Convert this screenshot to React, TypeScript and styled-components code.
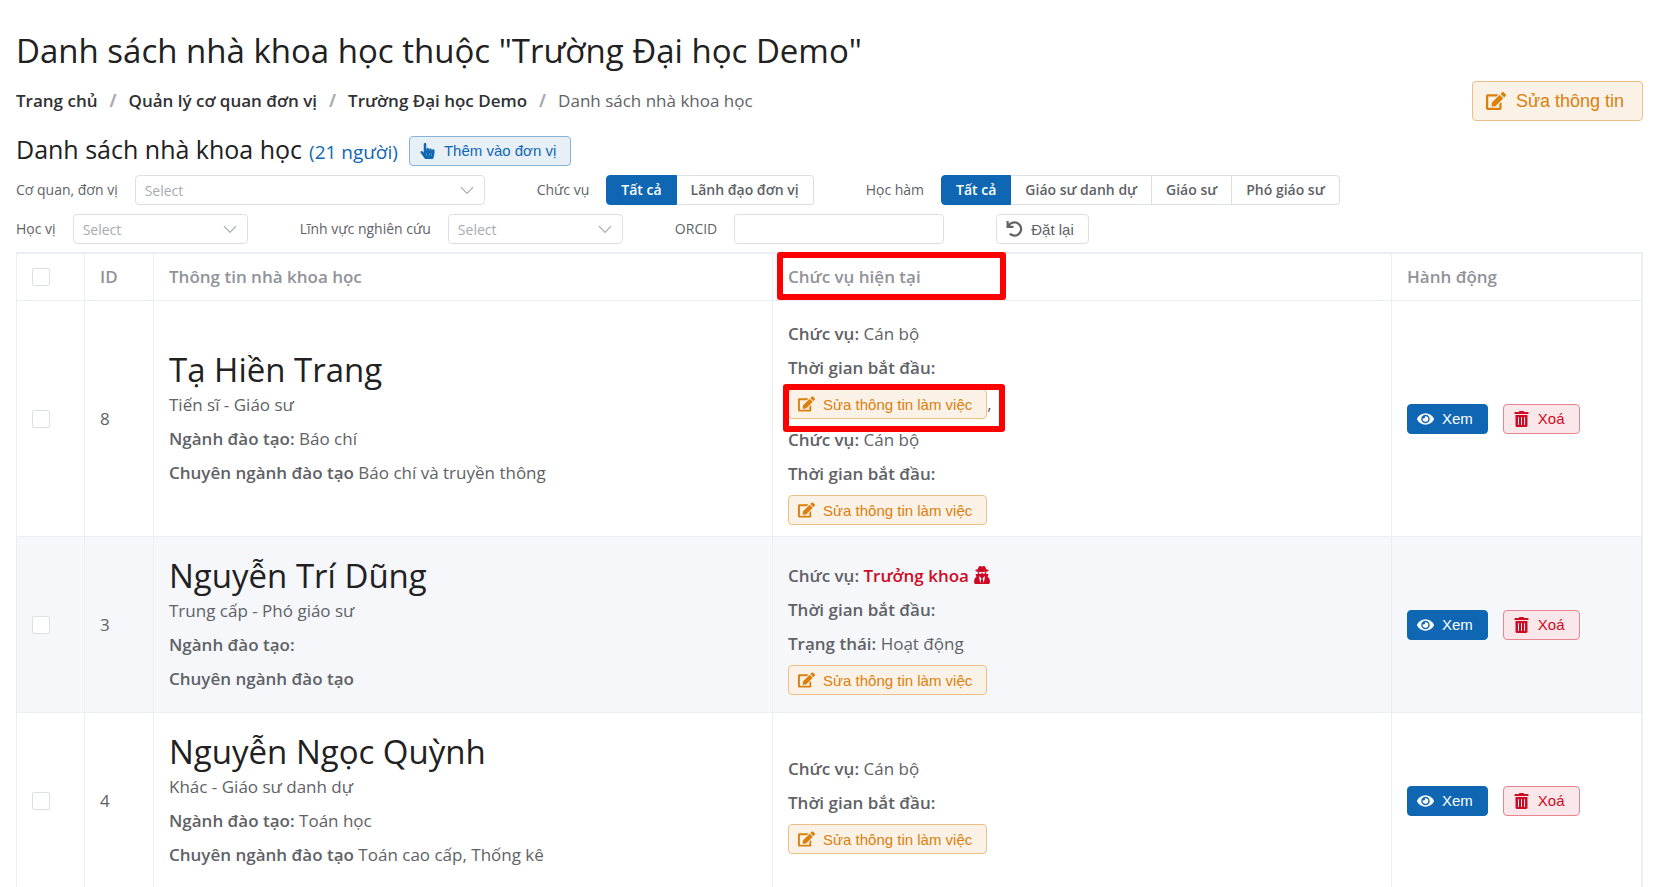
import React from "react";
import styled, { createGlobalStyle, css } from "styled-components";
import { FaEdit, FaEye, FaHandPointer, FaTrashAlt, FaUndo, FaUserSecret } from "react-icons/fa";

const GlobalStyle = createGlobalStyle`
  * { box-sizing: border-box; }
  body {
    margin: 0;
    background: #fff;
    color: #606266;
    font-family: "Open Sans", "Noto Sans", sans-serif;
    font-size: 17px;
    line-height: 24px;
  }
  button, input, select { font-family: inherit; }
`;

const Page = styled.main`
  padding: 26px 18px 0 16px;
`;

const PageTitle = styled.h1`
  margin: 0;
  font-size: 33px;
  line-height: 50px;
  font-weight: 400;
  color: #212121;
`;

const TopBar = styled.div`
  display: flex;
  align-items: center;
  justify-content: space-between;
  margin-top: 5px;
`;

const Crumbs = styled.ol`
  display: flex;
  gap: 12px;
  margin: 0;
  padding: 0;
  list-style: none;
  li {
    display: flex;
    gap: 12px;
  }
  li + li::before {
    content: "/";
    color: #a8abb2;
    font-weight: 700;
  }
`;

const CrumbLink = styled.a`
  color: #303133;
  font-weight: 600;
  text-decoration: none;
`;

type Tone = "plain" | "info" | "warning" | "danger" | "primary";

const tones = {
  plain: css`color: #606266; background: #fff; border-color: #dcdfe6;`,
  info: css`color: #0f67b4; background: #e7f0f7; border-color: #87b3d9;`,
  warning: css`color: #db7f0d; background: #fbf2e7; border-color: #edbf86;`,
  danger: css`color: #cf0a24; background: #fae7e9; border-color: #e78591;`,
  primary: css`color: #fff; background: #0f67b4; border-color: #0f67b4;`,
};

const Button = styled.button<{ $tone: Tone; $large?: boolean }>`
  display: inline-flex;
  align-items: center;
  justify-content: center;
  gap: ${(p) => (p.$large ? 10 : 8)}px;
  height: ${(p) => (p.$large ? 40 : 30)}px;
  padding: 0 ${(p) => (p.$large ? 18 : 14)}px 0 ${(p) => (p.$large ? 13 : 9)}px;
  border: 1px solid;
  border-radius: 4px;
  font-family: "Liberation Sans", Arial, sans-serif;
  font-size: ${(p) => (p.$large ? 18 : 15)}px;
  white-space: nowrap;
  cursor: pointer;
  ${(p) => tones[p.$tone]}
  svg {
    flex: none;
    width: ${(p) => (p.$large ? 20 : 17)}px;
    height: ${(p) => (p.$large ? 20 : 16)}px;
  }
`;

const SectionHead = styled.div`
  display: flex;
  align-items: center;
  gap: 11px;
  margin-top: 13px;
`;

const SectionTitle = styled.h2`
  margin: 0;
  font-size: 25px;
  line-height: 30px;
  font-weight: 400;
  color: #212121;
`;

const Count = styled.span`
  margin-left: 2px;
  font-size: 19px;
  color: #0f67b4;
`;

const Filters = styled.form`
  display: flex;
  flex-direction: column;
  gap: 9px;
  margin: 8px 0;
`;

const FilterRow = styled.div`
  display: flex;
  align-items: center;
  gap: 52px;
`;

const Field = styled.div`
  display: flex;
  align-items: center;
  gap: 17px;
  font-size: 14px;
`;

const controlBox = css`
  height: 30px;
  border: 1px solid #dcdfe6;
  border-radius: 4px;
  background: #fff;
  font-size: 14px;
`;

const SelectBox = styled.div<{ $wide?: boolean }>`
  display: grid;
  align-items: center;
  width: ${(p) => (p.$wide ? 350 : 175)}px;
  select, svg { grid-area: 1 / 1; }
  select {
    ${controlBox}
    appearance: none;
    width: 100%;
    padding: 0 30px 0 9px;
    color: #a8abb2;
  }
  svg {
    justify-self: end;
    margin-right: 11px;
    pointer-events: none;
  }
`;

const TextInput = styled.input`
  ${controlBox}
  width: 210px;
  padding: 0 10px;
`;

const RadioGroup = styled.div`
  display: flex;
`;

const RadioOption = styled.label`
  display: flex;
  align-items: center;
  height: 30px;
  padding: 0 14px;
  border: 1px solid #dcdfe6;
  border-left-width: 0;
  font-weight: 600;
  font-size: 14px;
  cursor: pointer;
  &:first-child {
    border-left-width: 1px;
    border-radius: 4px 0 0 4px;
  }
  &:last-child { border-radius: 0 4px 4px 0; }
  &:has(input:checked) {
    background: #0f67b4;
    border-color: #0f67b4;
    color: #fff;
  }
  input {
    appearance: none;
    width: 0;
    height: 0;
    margin: 0;
  }
`;

const Table = styled.table`
  width: 100%;
  table-layout: fixed;
  border-collapse: separate;
  border-spacing: 0;
  border: solid #ebeef5;
  border-width: 2px 1px 0 1px;
`;

const HeadCell = styled.th`
  position: relative;
  height: 47px;
  padding: 0 15px;
  border: solid #ebeef5;
  border-width: 0 1px 1px 0;
  text-align: left;
  font-weight: 600;
  font-size: 17px;
  color: #909399;
`;

const Cell = styled.td`
  padding: 10px 15px;
  border: solid #ebeef5;
  border-width: 0 1px 1px 0;
  vertical-align: middle;
`;

const Row = styled.tr`
  &:nth-child(even) { background: #f5f7fb; }
`;

const CheckBox = styled.input`
  appearance: none;
  display: block;
  width: 18px;
  height: 18px;
  margin: 0;
  border: 1px solid #dcdfe6;
  border-radius: 2px;
  background: #fff;
`;

const Person = styled.div`
  padding: 7px 0 11px;
`;

const PersonName = styled.h3`
  margin: 0 0 1px;
  font-size: 33px;
  line-height: 44px;
  font-weight: 400;
  color: #212121;
`;

const Lines = styled.div`
  display: flex;
  flex-direction: column;
  gap: 10px;
  p { margin: 0; }
  b { font-weight: 600; }
`;

const Jobs = styled.div`
  display: flex;
  flex-direction: column;
  gap: 9px;
  padding: 11px 0 1px;
`;

const JobAction = styled.div`
  position: relative;
  display: flex;
  align-items: center;
`;

const Highlight = styled.span<{ $head?: boolean }>`
  position: absolute;
  left: ${(p) => (p.$head ? 4 : -5)}px;
  top: ${(p) => (p.$head ? -2 : -5)}px;
  width: ${(p) => (p.$head ? 229 : 222)}px;
  height: 48px;
  border: 6px solid #fe0000;
  border-radius: 3px;
  pointer-events: none;
`;

const Leader = styled.b`
  color: #cf0a24;
  svg { vertical-align: -2px; }
`;

const Actions = styled.div`
  display: flex;
  gap: 15px;
`;

const Chevron = () => (
  <svg width="14" height="9" viewBox="0 0 14 9" fill="none" stroke="#a8abb2" strokeWidth="1.2" aria-hidden="true">
    <path d="M1 1.2 7 7.4 13 1.2" />
  </svg>
);

function SelectField({ id, label, wide }: { id: string; label: string; wide?: boolean }) {
  return (
    <Field>
      <label htmlFor={id}>{label}</label>
      <SelectBox $wide={wide}>
        <select id={id} defaultValue="">
          <option value="">Select</option>
        </select>
        <Chevron />
      </SelectBox>
    </Field>
  );
}

function RadioField({ name, label, options }: { name: string; label: string; options: string[] }) {
  return (
    <Field>
      <span id={name}>{label}</span>
      <RadioGroup role="radiogroup" aria-labelledby={name}>
        {options.map((option, i) => (
          <RadioOption key={option}>
            <input type="radio" name={name} defaultChecked={i === 0} />
            {option}
          </RadioOption>
        ))}
      </RadioGroup>
    </Field>
  );
}

type Job = { role: string; leader?: boolean; status?: string; marked?: boolean };
type Scientist = { id: number; name: string; degree: string; field: string; major: string; jobs: Job[] };

const scientists: Scientist[] = [
  {
    id: 8,
    name: "Tạ Hiền Trang",
    degree: "Tiến sĩ - Giáo sư",
    field: "Báo chí",
    major: "Báo chí và truyền thông",
    jobs: [{ role: "Cán bộ", marked: true }, { role: "Cán bộ" }],
  },
  {
    id: 3,
    name: "Nguyễn Trí Dũng",
    degree: "Trung cấp - Phó giáo sư",
    field: "",
    major: "",
    jobs: [{ role: "Trưởng khoa", leader: true, status: "Hoạt động" }],
  },
  {
    id: 4,
    name: "Nguyễn Ngọc Quỳnh",
    degree: "Khác - Giáo sư danh dự",
    field: "Toán học",
    major: "Toán cao cấp, Thống kê",
    jobs: [{ role: "Cán bộ" }],
  },
];

function JobBlock({ job, last }: { job: Job; last: boolean }) {
  return (
    <>
      <Lines>
        <p>
          <b>Chức vụ:</b>{" "}
          {job.leader ? <Leader>{job.role} <FaUserSecret size={18} /></Leader> : job.role}
        </p>
        <p><b>Thời gian bắt đầu:</b></p>
        {job.status && <p><b>Trạng thái:</b> {job.status}</p>}
      </Lines>
      <JobAction>
        <Button type="button" $tone="warning"><FaEdit />Sửa thông tin làm việc</Button>
        {!last && ","}
        {job.marked && <Highlight />}
      </JobAction>
    </>
  );
}

export default function App() {
  return (
    <Page>
      <GlobalStyle />
      <PageTitle>Danh sách nhà khoa học thuộc "Trường Đại học Demo"</PageTitle>
      <TopBar>
        <nav>
          <Crumbs>
            <li><CrumbLink href="#home">Trang chủ</CrumbLink></li>
            <li><CrumbLink href="#units">Quản lý cơ quan đơn vị</CrumbLink></li>
            <li><CrumbLink href="#unit">Trường Đại học Demo</CrumbLink></li>
            <li>Danh sách nhà khoa học</li>
          </Crumbs>
        </nav>
        <Button type="button" $tone="warning" $large><FaEdit />Sửa thông tin</Button>
      </TopBar>

      <SectionHead>
        <SectionTitle>Danh sách nhà khoa học<Count> (21 người)</Count></SectionTitle>
        <Button type="button" $tone="info"><FaHandPointer />Thêm vào đơn vị</Button>
      </SectionHead>

      <Filters>
        <FilterRow>
          <SelectField id="unit" label="Cơ quan, đơn vị" wide />
          <RadioField name="position" label="Chức vụ" options={["Tất cả", "Lãnh đạo đơn vị"]} />
          <RadioField name="rank" label="Học hàm" options={["Tất cả", "Giáo sư danh dự", "Giáo sư", "Phó giáo sư"]} />
        </FilterRow>
        <FilterRow>
          <SelectField id="degree" label="Học vị" />
          <SelectField id="research" label="Lĩnh vực nghiên cứu" />
          <Field>
            <label htmlFor="orcid">ORCID</label>
            <TextInput id="orcid" type="text" />
          </Field>
          <Button type="reset" $tone="plain"><FaUndo />Đặt lại</Button>
        </FilterRow>
      </Filters>

      <Table>
        <colgroup>
          <col style={{ width: 68 }} />
          <col style={{ width: 69 }} />
          <col />
          <col />
          <col style={{ width: 250 }} />
        </colgroup>
        <thead>
          <tr>
            <HeadCell><CheckBox type="checkbox" aria-label="Chọn tất cả" /></HeadCell>
            <HeadCell>ID</HeadCell>
            <HeadCell>Thông tin nhà khoa học</HeadCell>
            <HeadCell>Chức vụ hiện tại<Highlight $head /></HeadCell>
            <HeadCell>Hành động</HeadCell>
          </tr>
        </thead>
        <tbody>
          {scientists.map((s) => (
            <Row key={s.id}>
              <Cell><CheckBox type="checkbox" aria-label={s.name} /></Cell>
              <Cell>{s.id}</Cell>
              <Cell>
                <Person>
                  <PersonName>{s.name}</PersonName>
                  <Lines>
                    <p>{s.degree}</p>
                    <p><b>Ngành đào tạo:</b> {s.field}</p>
                    <p><b>Chuyên ngành đào tạo</b> {s.major}</p>
                  </Lines>
                </Person>
              </Cell>
              <Cell>
                <Jobs>
                  {s.jobs.map((job, i) => (
                    <JobBlock key={i} job={job} last={i === s.jobs.length - 1} />
                  ))}
                </Jobs>
              </Cell>
              <Cell>
                <Actions>
                  <Button type="button" $tone="primary"><FaEye />Xem</Button>
                  <Button type="button" $tone="danger"><FaTrashAlt />Xoá</Button>
                </Actions>
              </Cell>
            </Row>
          ))}
        </tbody>
      </Table>
    </Page>
  );
}
